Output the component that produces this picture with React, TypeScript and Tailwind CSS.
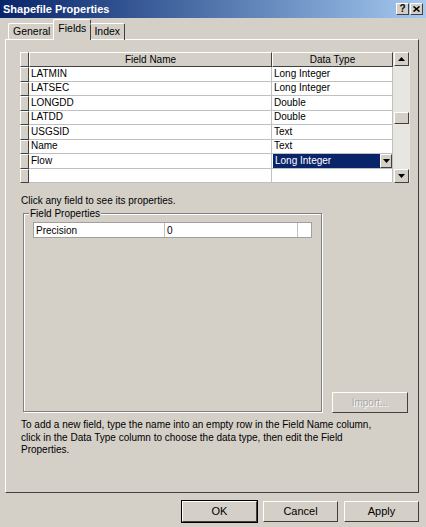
const rows = [
  { name: "LATMIN", type: "Long Integer" },
  { name: "LATSEC", type: "Long Integer" },
  { name: "LONGDD", type: "Double" },
  { name: "LATDD", type: "Double" },
  { name: "USGSID", type: "Text" },
  { name: "Name", type: "Text" },
  { name: "Flow", type: "Long Integer", selected: true },
  { name: "", type: "" },
];

// classic 3D borders
const raised = "border border-t-white border-l-white border-r-[#404040] border-b-[#404040]";

function Arrow({ up }: { up?: boolean }) {
  return (
    <svg width="7" height="4" viewBox="0 0 7 4">
      <path d={up ? "M3.5 0 L7 4 L0 4 Z" : "M0 0 L7 0 L3.5 4 Z"} fill="#000" />
    </svg>
  );
}

function ScrollButton({ up }: { up?: boolean }) {
  return (
    <div className={`h-[14px] w-[15px] bg-[#d4d0c8] ${raised} flex items-center justify-center`}>
      <Arrow up={up} />
    </div>
  );
}

function Button({ label, isDefault }: { label: string; isDefault?: boolean }) {
  return (
    <div
      className={`flex h-[21px] w-[75px] items-center justify-center bg-[#d4d0c8] ${raised} ${
        isDefault ? "outline outline-1 outline-black" : ""
      } text-[11px] text-black`}
    >
      {label}
    </div>
  );
}

export default function App() {
  return (
    <div className="flex h-[527px] w-[426px] flex-col overflow-hidden bg-[#d4d0c8] font-['Liberation_Sans',Arial,sans-serif] text-[10px] text-black">
      {/* title bar */}
      <div className="flex h-[18px] shrink-0 items-center justify-between bg-gradient-to-r from-[#0a246a] to-[#a6caf0] pl-[3px] pr-[3px]">
        <span className="text-[11px] font-bold text-white">Shapefile Properties</span>
        <div className="flex gap-[1px]">
          <div className={`flex h-[12px] w-[13px] items-center justify-center bg-[#d4d0c8] ${raised} text-[10px] font-bold leading-none`}>?</div>
          <div className={`flex h-[12px] w-[13px] items-center justify-center bg-[#d4d0c8] ${raised}`}>
            <svg width="7" height="6" viewBox="0 0 7 6">
              <path d="M0.5 0.5 L6.5 5.5 M6.5 0.5 L0.5 5.5" stroke="#000" strokeWidth="1.6" />
            </svg>
          </div>
        </div>
      </div>

      {/* tabs */}
      <div className="relative z-10 flex h-[21px] shrink-0 items-end pl-[8px] text-[10.5px]">
        <div className="mb-[-1px] flex h-[17px] items-center rounded-t-[2px] border-l border-t border-white px-[4px]">
          General
        </div>
        <div className="mx-[-1px] mb-[-1px] flex h-[21px] items-center rounded-t-[2px] border-l border-r border-t border-l-white border-t-white border-r-[#404040] bg-[#d4d0c8] px-[4px] pb-[2px]">
          Fields
        </div>
        <div className="mb-[-1px] flex h-[17px] items-center rounded-t-[2px] border-r border-t border-t-white border-r-[#404040] px-[4px]">
          Index
        </div>
      </div>

      {/* tab panel */}
      <div className="ml-[5px] mr-[7px] flex h-[454px] shrink-0 flex-col border border-l-white border-t-white border-r-[#404040] border-b-[#404040] pl-[14px] pt-[12px]">
        {/* grid */}
        <div className="flex w-[390px] bg-white">
          <div className="flex flex-1 flex-col">
            <div className="flex h-[15px]">
              <div className={`w-[9px] bg-[#d4d0c8] ${raised}`} />
              <div className={`flex w-[243px] items-center justify-center bg-[#d4d0c8] ${raised}`}>Field Name</div>
              <div className={`flex flex-1 items-center justify-center bg-[#d4d0c8] ${raised}`}>Data Type</div>
            </div>
            {rows.map((r, i) => (
              <div key={i} className="flex h-[14.5px]">
                <div className={`w-[9px] bg-[#d4d0c8] ${raised}`} />
                <div className="flex w-[243px] items-center border-b border-r border-[#c0c0c0] pl-[2px] leading-none">
                  {r.name}
                </div>
                <div className="flex flex-1 items-center border-b border-r border-[#c0c0c0] leading-none">
                  {r.selected ? (
                    <div className="flex h-full flex-1 items-stretch pl-[1px]">
                      <div className="flex flex-1 items-center bg-[#0a246a] pl-[2px] text-white">{r.type}</div>
                      <div className={`flex w-[12px] items-center justify-center bg-[#d4d0c8] ${raised}`}>
                        <Arrow />
                      </div>
                    </div>
                  ) : (
                    <span className="pl-[2px]">{r.type}</span>
                  )}
                </div>
              </div>
            ))}
          </div>
          {/* scrollbar */}
          <div className="flex w-[17px] flex-col items-center bg-[#e8e6e1] px-[1px]">
            <ScrollButton up />
            <div className="relative w-full flex-1">
              <div className={`absolute left-0 top-[46px] h-[12px] w-[15px] bg-[#d4d0c8] ${raised}`} />
            </div>
            <ScrollButton />
          </div>
        </div>

        <div className="mt-[10px] pl-[1px]">Click any field to see its properties.</div>

        {/* field properties group + import */}
        <div className="mt-[5px] flex items-end">
          <div className="relative ml-[3px] h-[199px] w-[299px] border border-[#808080] shadow-[1px_1px_0_#fff,inset_1px_1px_0_#fff]">
            <span className="absolute left-[5px] top-[-8px] bg-[#d4d0c8] px-[1px]">Field Properties</span>
            <div className="ml-[9px] mt-[8px] flex h-[16px] w-[279px] border border-[#a0a0a0] bg-white">
              <div className="flex w-[131px] items-center border-r border-[#c0c0c0] pl-[2px]">Precision</div>
              <div className="flex w-[133px] items-center border-r border-[#c0c0c0] pl-[2px]">0</div>
              <div className="flex-1" />
            </div>
          </div>
          <div className="mb-[-1px] ml-[10px]">
            <div className={`flex h-[21px] w-[76px] items-center justify-center bg-[#d4d0c8] ${raised} text-[#a8a8a8] [text-shadow:1px_1px_0_#fff]`}>
              Import...
            </div>
          </div>
        </div>

        <p className="mt-[7px] pl-[1px] leading-[12.5px]">
          To add a new field, type the name into an empty row in the Field Name column,
          <br />
          click in the Data Type column to choose the data type, then edit the Field
          <br />
          Properties.
        </p>
      </div>

      {/* bottom buttons */}
      <div className="mt-[8px] flex shrink-0 justify-end gap-[6px] pr-[7px]">
        <Button label="OK" isDefault />
        <Button label="Cancel" />
        <Button label="Apply" />
      </div>
    </div>
  );
}
